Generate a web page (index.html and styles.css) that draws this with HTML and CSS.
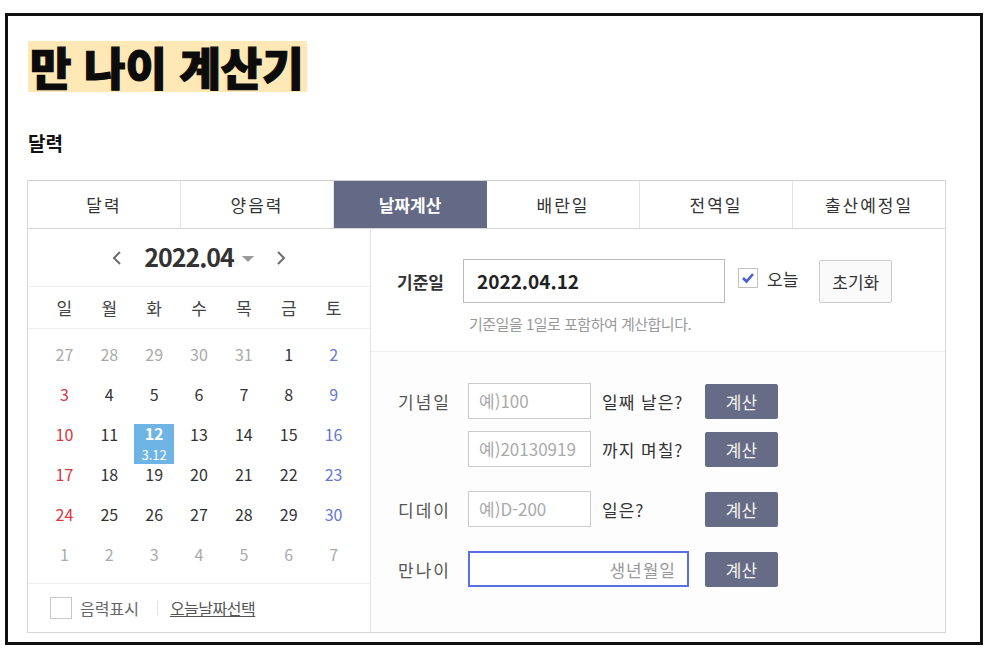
FILE: index.html
```html
<!DOCTYPE html>
<html lang="ko">
<head>
    <meta charset="UTF-8">
    <meta name="viewport" content="width=device-width, initial-scale=1.0">
    <title>만 나이 계산기</title>
    <link rel="stylesheet" href="styles.css">
</head>
<body>
    <div class="frame">
        <!-- 제목 -->
        <h1 class="title"><span>만 나이 계산기</span></h1>
        <h2 class="subtitle">달력</h2>

        <div class="calc">
            <!-- 탭 메뉴 -->
            <ul class="tabs">
                <li>달력</li>
                <li>양음력</li>
                <li class="on">날짜계산</li>
                <li>배란일</li>
                <li>전역일</li>
                <li>출산예정일</li>
            </ul>

            <div class="calc-body">
                <!-- 왼쪽 달력 -->
                <div class="cal">
                    <div class="cal-head">
                        <span class="arrow">
                            <svg width="10" height="16" viewBox="0 0 10 16"><polyline points="8,2 2,8 8,14" fill="none" stroke="#6d6d6d" stroke-width="2"/></svg>
                        </span>
                        <strong class="month">2022.04</strong>
                        <span class="caret"></span>
                        <span class="arrow">
                            <svg width="10" height="16" viewBox="0 0 10 16"><polyline points="2,2 8,8 2,14" fill="none" stroke="#6d6d6d" stroke-width="2"/></svg>
                        </span>
                    </div>
                    <div class="week">
                        <span>일</span><span>월</span><span>화</span><span>수</span><span>목</span><span>금</span><span>토</span>
                    </div>
                    <div class="days">
                        <span class="off">27</span><span class="off">28</span><span class="off">29</span><span class="off">30</span><span class="off">31</span><span>1</span><span class="sat">2</span>
                        <span class="sun">3</span><span>4</span><span>5</span><span>6</span><span>7</span><span>8</span><span class="sat">9</span>
                        <span class="sun">10</span><span>11</span><span class="today"><em><b>12</b><small>3.12</small></em></span><span>13</span><span>14</span><span>15</span><span class="sat">16</span>
                        <span class="sun">17</span><span>18</span><span>19</span><span>20</span><span>21</span><span>22</span><span class="sat">23</span>
                        <span class="sun">24</span><span>25</span><span>26</span><span>27</span><span>28</span><span>29</span><span class="sat">30</span>
                        <span class="off">1</span><span class="off">2</span><span class="off">3</span><span class="off">4</span><span class="off">5</span><span class="off">6</span><span class="off">7</span>
                    </div>
                    <div class="cal-foot">
                        <span class="box"></span>
                        <span class="lunar">음력표시</span>
                        <span class="bar"></span>
                        <a class="today-link">오늘날짜선택</a>
                    </div>
                </div>

                <!-- 오른쪽 날짜계산 -->
                <div class="panel">
                    <div class="base">
                        <div class="base-row">
                            <strong class="base-label">기준일</strong>
                            <div class="base-input">2022.04.12</div>
                            <span class="check">
                                <svg width="14" height="12" viewBox="0 0 14 12"><polyline points="2,6 5.5,9.5 12,2" fill="none" stroke="#4d5fd6" stroke-width="2.6"/></svg>
                            </span>
                            <span class="check-text">오늘</span>
                            <span class="reset">초기화</span>
                        </div>
                        <p class="note">기준일을 1일로 포함하여 계산합니다.</p>
                    </div>

                    <div class="rows">
                        <div class="row">
                            <span class="label">기념일</span>
                            <span class="field">예)100</span>
                            <span class="after">일째 날은?</span>
                            <span class="btn">계산</span>
                        </div>
                        <div class="row">
                            <span class="label"></span>
                            <span class="field">예)20130919</span>
                            <span class="after">까지 며칠?</span>
                            <span class="btn">계산</span>
                        </div>
                        <div class="row gap">
                            <span class="label">디데이</span>
                            <span class="field">예)D-200</span>
                            <span class="after">일은?</span>
                            <span class="btn">계산</span>
                        </div>
                        <div class="row gap">
                            <span class="label">만나이</span>
                            <span class="field wide">생년월일</span>
                            <span class="btn">계산</span>
                        </div>
                    </div>
                </div>
            </div>
        </div>
    </div>
</body>
</html>
```

FILE: styles.css
```css
/* 기본 */
body, html {
    margin: 0;
    padding: 0;
    background: #fff;
    font-family: "Noto Sans CJK KR", "Noto Sans", sans-serif;
    color: #333;
}

/* 바깥 테두리 */
.frame {
    box-sizing: border-box;
    width: 978px;
    height: 632px;
    margin: 13px 0 0 5px;
    border: 3px solid #111;
    padding: 25px 0 0 19px;
}

.title {
    margin: 0;
    line-height: 1;
}

.title span {
    display: inline-block;
    margin-left: 1px;
    padding: 0 3px 0 2px;
    height: 51px;
    line-height: 51px;
    background: #fde8b6;
    font-size: 45px;
    font-weight: 900;
    letter-spacing: 0;
    color: #0c0c0c;
    -webkit-text-stroke: 1.2px #0c0c0c;
}

.subtitle {
    margin: 39px 0 25px 1px;
    font-size: 19px;
    line-height: 24px;
    font-weight: 700;
    color: #111;
}

/* 계산기 박스 */
.calc {
    width: 919px;
    box-sizing: border-box;
    border: 1px solid #d6d6d6;
    border-top-color: #cfcfcf;
}

.tabs {
    display: flex;
    margin: 0;
    padding: 0;
    list-style: none;
    border-bottom: 1px solid #d6d6d6;
}

.tabs li {
    flex: 1;
    height: 47px;
    line-height: 47px;
    text-align: center;
    font-size: 17px;
    letter-spacing: 2px;
    color: #333;
    border-right: 1px solid #e3e3e3;
}

.tabs li:last-child {
    border-right: 0;
}

.tabs li.on {
    background: #646a86;
    color: #fff;
    font-weight: 700;
    letter-spacing: 0;
    border-right-color: #646a86;
}

.calc-body {
    display: flex;
    height: 403px;
}

/* 달력 */
.cal {
    width: 342px;
    border-right: 1px solid #e3e3e3;
    display: flex;
    flex-direction: column;
}

.cal-head {
    height: 57px;
    border-bottom: 1px solid #eee;
    display: flex;
    justify-content: center;
    align-items: center;
}

.arrow {
    display: flex;
    align-items: center;
}

.month {
    margin: -4px 8px 0 22px;
    font-size: 25px;
    font-weight: 700;
    letter-spacing: -1px;
    color: #333;
}

.caret {
    width: 0;
    height: 0;
    border-left: 6px solid transparent;
    border-right: 6px solid transparent;
    border-top: 6px solid #999;
    margin: 2px 22px 0 0;
}

.week {
    display: grid;
    grid-template-columns: repeat(7, 1fr);
    padding: 0 14px;
    height: 41px;
    border-bottom: 1px solid #eee;
    align-items: center;
    text-align: center;
    font-size: 17px;
    color: #444;
}

.days {
    display: grid;
    grid-template-columns: repeat(7, 1fr);
    grid-auto-rows: 40px;
    padding: 6px 14px 8px;
    text-align: center;
    font-size: 16px;
    color: #333;
}

.days span {
    line-height: 38px;
}

.days .off { color: #aaa; }
.days .sun { color: #d9363f; }
.days .sat { color: #6778cf; }

.days .today {
    position: relative;
}

/* 오늘 날짜 표시 (아래 줄까지 걸침) */
.days .today em {
    position: absolute;
    top: 9px;
    left: 50%;
    margin-left: -20px;
    width: 40px;
    height: 40px;
    background: #6eb4e4;
    color: #fff;
    font-style: normal;
    display: flex;
    flex-direction: column;
    align-items: center;
}

.days .today b {
    font-size: 16px;
    line-height: 24px;
    margin-top: -3px;
}

.days .today small {
    font-size: 13px;
    line-height: 19px;
}

.cal-foot {
    flex: 1;
    border-top: 1px solid #eee;
    display: flex;
    align-items: center;
    padding-left: 22px;
    font-size: 16px;
}

.cal-foot .box {
    width: 20px;
    height: 20px;
    border: 1px solid #c8c8c8;
    margin-right: 8px;
}

.lunar {
    color: #666;
}

.bar {
    width: 1px;
    height: 14px;
    background: #e2e2e2;
    margin: 0 12px 0 18px;
}

.today-link {
    color: #555;
    text-decoration: underline;
    letter-spacing: -0.5px;
}

/* 날짜계산 영역 */
.panel {
    flex: 1;
    display: flex;
    flex-direction: column;
}

.base {
    height: 123px;
    border-bottom: 1px solid #eee;
    padding: 30px 0 0 26px;
    box-sizing: border-box;
}

.base-row {
    display: flex;
    align-items: center;
}

.base-label {
    font-size: 17px;
    font-weight: 700;
    color: #333;
    width: 66px;
}

.base-input {
    box-sizing: border-box;
    width: 262px;
    height: 44px;
    border: 1px solid #bbb;
    padding-left: 13px;
    line-height: 42px;
    font-size: 19px;
    font-weight: 700;
    color: #222;
}

.check {
    box-sizing: border-box;
    width: 20px;
    height: 20px;
    border: 1px solid #c2c2c2;
    margin: -6px 0 0 13px;
    display: flex;
    align-items: center;
    justify-content: center;
}

.check-text {
    margin: -6px 0 0 9px;
    font-size: 17px;
    color: #333;
}

.reset {
    box-sizing: border-box;
    margin-left: 21px;
    width: 73px;
    height: 43px;
    line-height: 41px;
    text-align: center;
    border: 1px solid #ccc;
    border-radius: 2px;
    background: #fafafa;
    font-size: 17px;
    color: #333;
}

.note {
    margin: 11px 0 0 72px;
    font-size: 15px;
    line-height: 20px;
    color: #999;
    letter-spacing: -0.5px;
}

.rows {
    flex: 1;
    display: flex;
    flex-direction: column;
    background: #fdfdfd;
    padding: 31px 0 0 27px;
}

.row {
    display: flex;
    align-items: center;
    height: 36px;
    margin-bottom: 12px;
}

.row.gap {
    margin-top: 12px;
}

.label {
    width: 70px;
    font-size: 17px;
    color: #555;
    letter-spacing: 2px;
}

.field {
    box-sizing: border-box;
    width: 123px;
    height: 36px;
    border: 1px solid #ccc;
    background: #fff;
    padding-left: 10px;
    line-height: 34px;
    font-size: 17px;
    color: #aaa;
}

.field.wide {
    width: 221px;
    border: 2px solid #5b70e0;
    text-align: right;
    padding: 0 11px 0 0;
    margin-right: 16px;
    color: #999;
    letter-spacing: 1px;
}

.after {
    width: 103px;
    margin-left: 11px;
    font-size: 17px;
    color: #333;
    letter-spacing: 1px;
}

.btn {
    width: 73px;
    height: 35px;
    line-height: 35px;
    text-align: center;
    background: #676c86;
    border-radius: 2px;
    color: #f2f2f2;
    font-size: 17px;
}
```
